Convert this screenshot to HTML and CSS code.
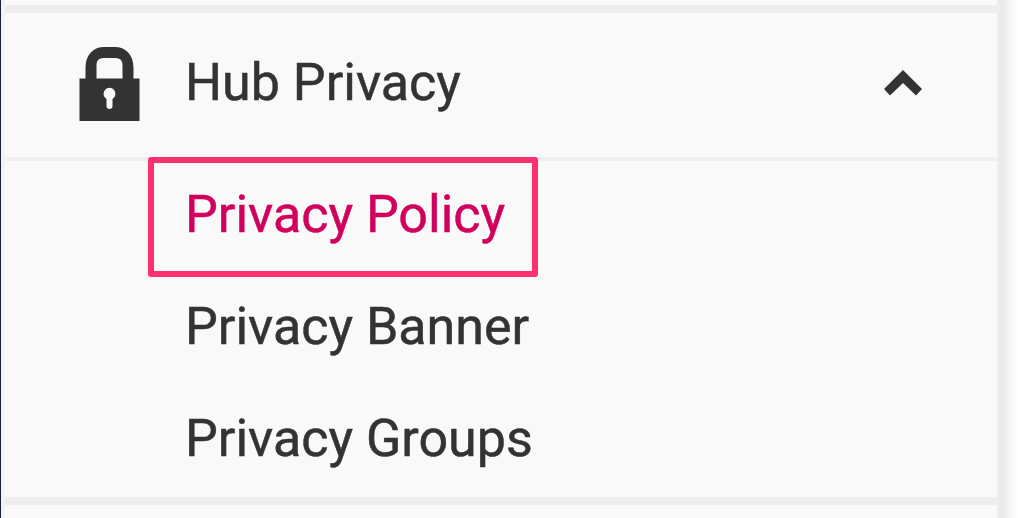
FILE: index.html
```
<!DOCTYPE html>
<html lang="en">
<head>
    <meta charset="UTF-8">
    <meta name="viewport" content="width=device-width, initial-scale=1.0">
    <title>Hub Privacy</title>
    <link rel="stylesheet" href="styles.css">
</head>
<body>
    <div class="sidebar">
        <div class="divider"></div>

        <div class="menu-header">
            <svg class="lock" viewBox="0 0 62 76">
                <path fill-rule="evenodd" d="M1.500 31.500H7.500V21C7.500 7 16 0 26 0H37C47 0 55.500 7 55.500 21V31.500H61.500V74H1.500ZM18.500 31.500H44.500V18Q44.500 11 37.500 11H25.500Q18.500 11 18.500 18ZM28.500 52V59Q28.500 62 31.500 62Q34.500 62 34.500 59V52A6 6 0 1 0 28.500 52Z"/>
            </svg>
            <span class="menu-title">Hub Privacy</span>
            <svg class="arrow" viewBox="0 0 38 26">
                <path d="M19 0L38 19L32 25.500L19 13L6 25.500L0 19Z"/>
            </svg>
        </div>

        <ul class="submenu">
            <li><a class="active">Privacy Policy</a></li>
            <li><a>Privacy Banner</a></li>
            <li><a>Privacy Groups</a></li>
        </ul>

        <div class="divider"></div>
        <div class="highlight"></div>
    </div>
    <div class="shadow"></div>
</body>
</html>
```
FILE: styles.css
```
body {
    margin: 0;
    height: 518px;
    display: flex;
    overflow: hidden;
    background: white;
    font-family: Roboto, sans-serif;
    font-size: 52px;
    color: #333;
    -webkit-text-stroke: 0.5px;
}

.sidebar {
    position: relative;
    box-sizing: border-box;
    width: 997px;
    padding-top: 5px;
    border-left: 1px solid #17213f;
    background: linear-gradient(to right, #f3f3f3 4px, #f9f9f9 4px);
}

.divider {
    height: 8px;
    margin-left: 4px;
    background-color: #ededed;
}

.menu-header {
    box-sizing: border-box;
    height: 148px;
    margin-left: 4px;
    padding: 0 75px 0 73px;
    display: flex;
    align-items: center;
    border-bottom: 4px solid #efefef;
}

.lock {
    width: 62px;
    height: 76px;
    margin-right: 45px;
    fill: #333;
}

.menu-title {
    flex: 1;
    padding-bottom: 4px;
    line-height: 62px;
}

.arrow {
    width: 38px;
    height: 26px;
    margin-bottom: 4px;
    fill: #333;
}

.submenu {
    margin: 0;
    padding: 0;
    list-style: none;
}

.submenu li {
    box-sizing: border-box;
    height: 112px;
    padding: 0 0 4px 184px;
    line-height: 108px;
}

.submenu .active {
    color: #d1005d;
}

.highlight {
    position: absolute;
    left: 147px;
    top: 157px;
    box-sizing: border-box;
    width: 390px;
    height: 120px;
    border: 6px solid #ff3070;
    border-radius: 3px;
}

.shadow {
    flex: 1;
    background: linear-gradient(to right, #efefef, #e8e8e8 5px, #efefef 9px, #f7f7f7 13px, #fdfdfd 19px, white);
}
```
